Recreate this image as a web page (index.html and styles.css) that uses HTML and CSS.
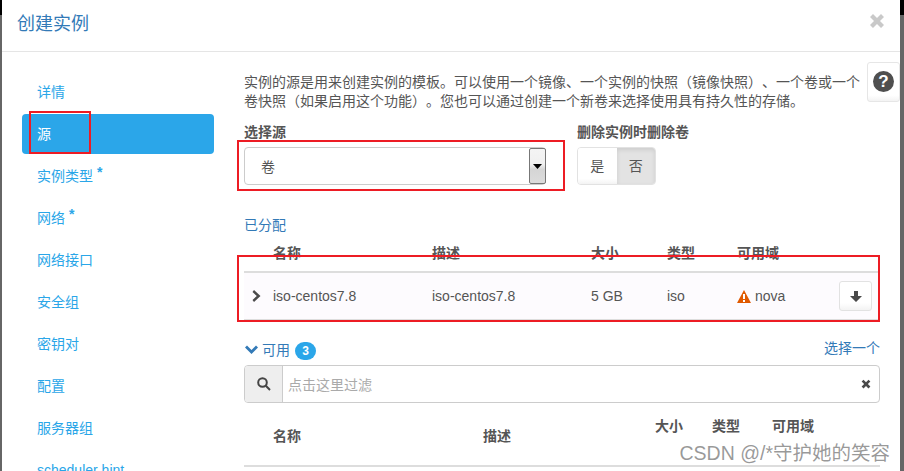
FILE: index.html
```html
<!DOCTYPE html>
<html lang="zh-CN">
<head>
<meta charset="utf-8">
<title>创建实例</title>
<link rel="stylesheet" href="styles.css">
</head>
<body>
<div class="screen">
  <div class="edge edge-left"></div>
  <div class="modal">
    <header class="modal-header">
      <h4 class="modal-title">创建实例</h4>
      <svg class="close-icon" width="16" height="16" viewBox="0 0 16 16"><path d="M1 4 4 1l4 4 4-4 3 3-4 4 4 4-3 3-4-4-4 4-3-3 4-4z"/></svg>
    </header>
    <div class="modal-body">
      <nav class="sidebar">
        <a class="nav-item">详情</a>
        <a class="nav-item active">源</a>
        <a class="nav-item">实例类型<sup class="star">*</sup></a>
        <a class="nav-item">网络<sup class="star">*</sup></a>
        <a class="nav-item">网络接口</a>
        <a class="nav-item">安全组</a>
        <a class="nav-item">密钥对</a>
        <a class="nav-item">配置</a>
        <a class="nav-item">服务器组</a>
        <a class="nav-item">scheduler hint</a>
      </nav>
      <main class="content">
        <p class="intro">实例的源是用来创建实例的模板。可以使用一个镜像、一个实例的快照（镜像快照）、一个卷或一个<br>卷快照（如果启用这个功能）。您也可以通过创建一个新卷来选择使用具有持久性的存储。</p>
        <div class="form-row">
          <div class="field field-source">
            <label class="field-label">选择源</label>
            <div class="select">
              <span class="select-value">卷</span>
              <span class="select-arrow"><svg width="9" height="5" viewBox="0 0 9 5"><path d="M0 0h9L4.500 5z"/></svg></span>
            </div>
          </div>
          <div class="field">
            <label class="field-label">删除实例时删除卷</label>
            <div class="toggle">
              <span class="toggle-option">是</span>
              <span class="toggle-option selected">否</span>
            </div>
          </div>
        </div>
        <div class="section-title">已分配</div>
        <div class="table-row head allocated-head">
          <span>名称</span><span>描述</span><span>大小</span><span>类型</span><span>可用域</span>
        </div>
        <div class="table-row body-row">
          <svg class="row-chevron" width="10" height="12" viewBox="0 0 10 12"><path d="M2 0 8.500 6 2 12 .5 10 4.800 6 .5 2z"/></svg>
          <span>iso-centos7.8</span>
          <span>iso-centos7.8</span>
          <span>5 GB</span>
          <span>iso</span>
          <span class="zone">
            <svg width="14" height="13" viewBox="0 0 14 13"><path class="warn" d="M7 0 14 13H0z"/><path class="warn-mark" d="M6 4h2v5H6zM6 10h2v2H6z"/></svg>
            nova
          </span>
          <button class="down-btn"><svg width="12" height="11" viewBox="0 0 12 11"><path d="M4 0h4v5h4L6 11 0 5h4z"/></svg></button>
        </div>
        <div class="available-bar">
          <div class="available-title">
            <svg width="13" height="9" viewBox="0 0 13 9"><path d="M2 .5 6.500 5 11 .5 13 2.500 6.500 9 0 2.500z"/></svg>
            <span>可用</span>
            <span class="badge">3</span>
          </div>
          <a class="pick-one">选择一个</a>
        </div>
        <div class="filter">
          <span class="filter-addon"><svg width="14" height="14" viewBox="0 0 14 14"><circle cx="5.500" cy="5.500" r="4.300"/><path d="M8.800 8.800 13 13"/></svg></span>
          <span class="filter-input">点击这里过滤</span>
          <svg class="filter-clear" width="10" height="10" viewBox="0 0 16 16"><path d="M1 4 4 1l4 4 4-4 3 3-4 4 4 4-3 3-4-4-4 4-3-3 4-4z"/></svg>
        </div>
        <div class="table-row head available-head">
          <span class="cell-low">名称</span><span class="cell-low">描述</span><span>大小</span><span>类型</span><span>可用域</span>
        </div>
      </main>
    </div>
    <button class="help-btn"><span class="help-mark">?</span></button>
    <div class="mark mark-nav"></div>
    <div class="mark mark-select"></div>
    <div class="mark mark-table"></div>
    <div class="watermark">CSDN @/*守护她的笑容</div>
  </div>
  <div class="edge edge-right"></div>
</div>
</body>
</html>
```

FILE: styles.css
```css
* { box-sizing: border-box; }
html, body { margin: 0; height: 100%; overflow: hidden; }
body {
  background: #fff;
  color: #555;
  font-family: "Liberation Sans", "Noto Sans CJK SC", sans-serif;
  font-size: 14px;
  text-spacing-trim: space-all;
  font-feature-settings: "palt" 0, "chws" 0;
}
.screen { display: flex; width: 904px; height: 471px; }
.edge { flex: none; background: linear-gradient(#000 15px, #666 15px); }
.edge-left { width: 2px; }
.edge-right { width: 4px; }
.modal { position: relative; flex: 1; background: #fff; overflow: hidden; }

.modal-header {
  display: flex;
  align-items: center;
  justify-content: space-between;
  height: 52px;
  padding: 0 15px 7px 15px;
  border-bottom: 1px solid #e5e5e5;
}
.modal-title { margin: 0; font-size: 18px; font-weight: 400; color: #337ab7; }
.close-icon { fill: #c9c9c9; margin-top: -3px; }

.modal-body { display: flex; height: 419px; }
.sidebar {
  flex: none;
  display: flex;
  flex-direction: column;
  gap: 2px;
  width: 242px;
  padding: 20px 30px 0 20px;
}
.nav-item {
  flex: none;
  display: block;
  height: 40px;
  padding-left: 15px;
  border-radius: 4px;
  color: #2aa6e8;
  line-height: 40px;
  white-space: nowrap;
}
.nav-item.active { background: #2ba6e9; color: #fff; }
.star { position: relative; top: 2px; margin-left: 4px; font-size: 14px; font-weight: 700; line-height: 0; vertical-align: super; }

.content { flex: none; width: 636px; }
.intro { margin: 21px 0 0; line-height: 19px; white-space: nowrap; }

.form-row { display: flex; gap: 31px; margin-top: 12px; }
.field-label { display: block; height: 18px; margin-bottom: 6px; font-weight: 700; line-height: 18px; }
.field-source { width: 302px; }
.select {
  display: flex;
  justify-content: space-between;
  height: 38px;
  border: 1px solid #ccc;
  border-radius: 4px;
  background: #fff;
}
.select-value { padding-left: 16px; line-height: 38px; }
.select-arrow {
  display: flex;
  align-items: center;
  justify-content: center;
  width: 17px;
  margin-right: -1px;
  border: 1px solid #777;
  border-radius: 2px;
  background: linear-gradient(#f4f4f4, #f0f0f0 45%, #d5d5d5 60%, #dcdcdc);
}
.select-arrow svg { fill: #000; }
.toggle {
  display: flex;
  width: 79px;
  height: 38px;
  border: 1px solid #e2e2e2;
  border-radius: 4px;
  overflow: hidden;
}
.toggle-option {
  flex: 1;
  text-align: center;
  line-height: 36px;
  background: linear-gradient(#fff 85%, #f3f3f3);
}
.toggle-option.selected { background: #e3e3e3; box-shadow: inset 0 2px 4px rgba(0,0,0,.1); }

.section-title { height: 18px; margin-top: 31px; color: #337ab7; line-height: 18px; }

.table-row {
  display: grid;
  align-items: center;
  padding-left: 29px;
  white-space: nowrap;
}
.head { font-weight: 700; color: #555; }
.allocated-head {
  grid-template-columns: 159px 159px 76px 70px 1fr;
  align-items: end;
  height: 39px;
  padding-bottom: 9px;
  border-bottom: 2px solid #ddd;
  line-height: 18px;
}
.body-row {
  position: relative;
  grid-template-columns: 159px 159px 76px 70px 1fr;
  height: 47px;
  border-bottom: 1px solid #ddd;
  background: #fdfbfe;
}
.row-chevron { position: absolute; left: 8px; top: 17px; fill: #4a4a4a; }
.zone { display: flex; align-items: center; gap: 4px; }
.warn { fill: #e05a00; }
.warn-mark { fill: #fff; }
.down-btn {
  position: absolute;
  left: 595px;
  top: 8px;
  display: flex;
  align-items: center;
  justify-content: center;
  width: 33px;
  height: 30px;
  padding: 0;
  border: 1px solid #e2e2e2;
  border-radius: 3px;
  background: linear-gradient(#fff 75%, #f3f3f3);
}
.down-btn svg { fill: #4a4a4a; }

.available-bar {
  display: flex;
  align-items: center;
  justify-content: space-between;
  height: 20px;
  margin-top: 19px;
}
.available-title { display: flex; align-items: center; gap: 4px; color: #337ab7; }
.available-title svg { margin-left: 1px; fill: #337ab7; }
.badge {
  display: inline-block;
  width: 21px;
  height: 18px;
  margin: 4px 0 0 1px;
  border-radius: 9px;
  background: #2ba6e9;
  color: #fff;
  font-size: 12px;
  font-weight: 700;
  line-height: 18px;
  text-align: center;
}
.pick-one { margin-top: -4px; color: #337ab7; }

.filter {
  display: flex;
  align-items: center;
  height: 38px;
  margin-top: 6px;
  border: 1px solid #ccc;
  border-radius: 4px;
}
.filter-addon {
  flex: none;
  display: flex;
  align-items: center;
  justify-content: center;
  width: 38px;
  height: 100%;
  border-right: 1px solid #ccc;
  border-radius: 3px 0 0 3px;
  background: #eee;
}
.filter-addon svg { fill: none; stroke: #444; stroke-width: 2; }
.filter-input { flex: 1; padding-left: 5px; color: #aaa; }
.filter-clear { margin-right: 8px; fill: #4a4a4a; }

.available-head {
  grid-template-columns: 210px 172px 57px 60px 1fr;
  align-items: start;
  height: 64px;
  padding-top: 14px;
  border-bottom: 2px solid #ddd;
  line-height: 18px;
}
.cell-low { margin-top: 10px; }

.help-btn {
  position: absolute;
  right: 0;
  top: 62px;
  display: flex;
  align-items: center;
  justify-content: center;
  width: 33px;
  height: 40px;
  padding: 0 0 2px;
  border: 1px solid #e6e6e6;
  border-radius: 3px;
  background: linear-gradient(#fff 85%, #f3f3f3);
}
.help-mark {
  width: 21px;
  height: 21px;
  border-radius: 50%;
  background: #4f4f4f;
  color: #fff;
  font-size: 17px;
  font-weight: 700;
  line-height: 21px;
  text-align: center;
}

.mark { position: absolute; border: 2px solid #ed1c24; pointer-events: none; }
.mark-nav { left: 27px; top: 111px; width: 62px; height: 43px; }
.mark-select { left: 235px; top: 140px; width: 328px; height: 51px; }
.mark-table { left: 235px; top: 255px; width: 643px; height: 67px; }

.watermark {
  position: absolute;
  right: 10px;
  top: 441px;
  color: rgba(120,120,120,.75);
  font-size: 19.500px;
  line-height: 24px;
  white-space: nowrap;
}
```
